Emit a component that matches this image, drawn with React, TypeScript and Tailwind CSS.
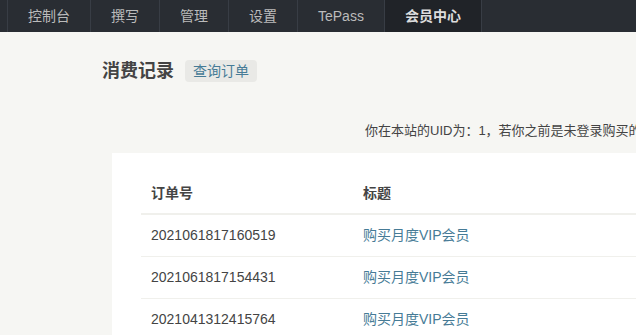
const navItems = ["控制台", "撰写", "管理", "设置", "TePass"];

const orders = [
  { id: "2021061817160519", title: "购买月度VIP会员" },
  { id: "2021061817154431", title: "购买月度VIP会员" },
  { id: "2021041312415764", title: "购买月度VIP会员" },
];

export default function App() {
  return (
    <div
      className="h-[335px] w-[636px] overflow-hidden bg-[#f6f6f3] text-[14px] text-[#444]"
      style={{ fontFamily: '"Liberation Sans", "Noto Sans CJK SC", sans-serif' }}
    >
      {/* 顶部导航 */}
      <nav className="flex h-8 bg-[#292d33] pl-[7px]">
        <ul className="flex border-l border-[#383d45]">
          {navItems.map((item) => (
            <li key={item} className="border-r border-[#383d45]">
              <a className="flex h-8 items-center px-5 text-[#bbb]">{item}</a>
            </li>
          ))}
          <li className="border-r border-[#383d45] bg-[#202328]">
            <a className="flex h-8 items-center px-5 font-bold text-[#ddd]">会员中心</a>
          </li>
        </ul>
      </nav>

      <div className="flex items-center gap-[11px] pl-[102px] pt-[28px]">
        <h2 className="text-[18px] font-bold leading-[22px] text-[#444]">消费记录</h2>
        <a className="flex h-[22px] items-center rounded-sm bg-[#e9e9e6] px-2 text-[14px] text-[#467b96]">
          查询订单
        </a>
      </div>

      <p className="mt-[39px] whitespace-nowrap pl-[365px] text-[13px] leading-5">
        你在本站的UID为：1，若你之前是未登录购买的，请先查询订单后绑定到你的账号
      </p>

      <div className="ml-[112px] mt-[12px] w-[700px] bg-white px-[29px] pt-5">
        <table className="w-full border-collapse text-left">
          <thead>
            <tr className="border-b-2 border-[#f0f0ec]">
              <th className="h-[41px] w-[212px] px-[10px] font-bold">订单号</th>
              <th className="h-[41px] px-[10px] font-bold">标题</th>
            </tr>
          </thead>
          <tbody>
            {orders.map((o) => (
              <tr key={o.id} className="border-b border-[#f0f0ec]">
                <td className="h-[42px] px-[10px]">{o.id}</td>
                <td className="h-[42px] px-[10px] text-[#467b96]">{o.title}</td>
              </tr>
            ))}
          </tbody>
        </table>
      </div>
    </div>
  );
}
